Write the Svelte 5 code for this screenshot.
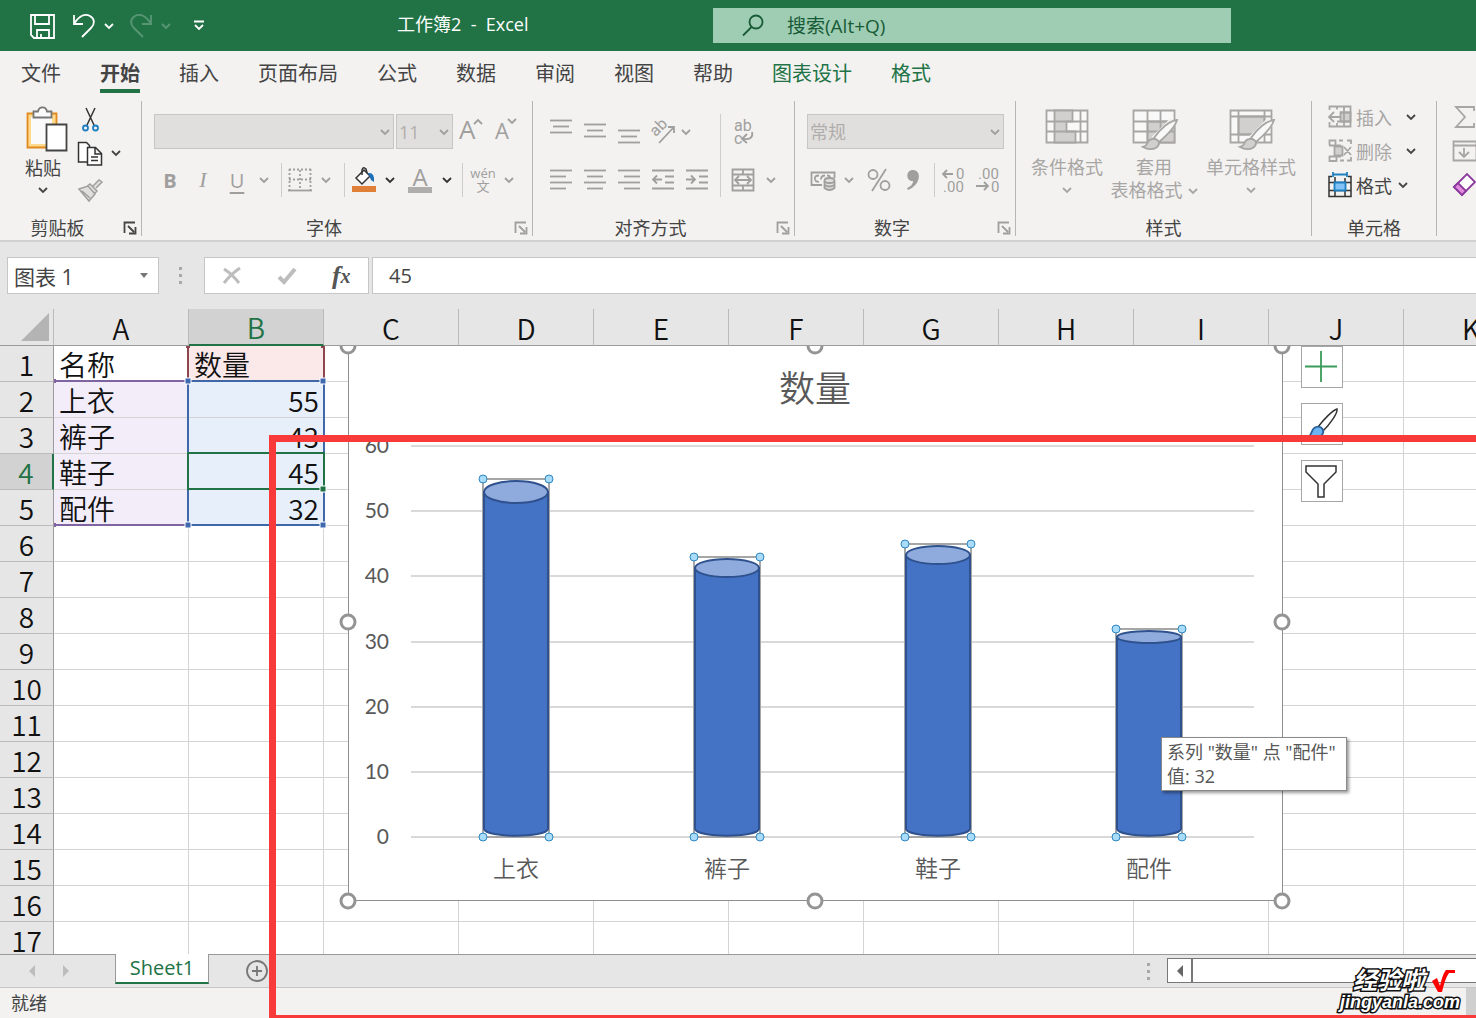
<script>
  const tabs = [
    { name: '文件' }, { name: '开始', active: true }, { name: '插入' }, { name: '页面布局' },
    { name: '公式' }, { name: '数据' }, { name: '审阅' }, { name: '视图' }, { name: '帮助' },
    { name: '图表设计', context: true }, { name: '格式', context: true },
  ];
  const columns = 'ABCDEFGHIJK'.split('');
  const rowCount = 17;
  const data = [
    ['名称', '数量'],
    ['上衣', 55],
    ['裤子', 43],
    ['鞋子', 45],
    ['配件', 32],
  ];
  const rows = Array.from({ length: rowCount }, (_, i) => ({ n: i + 1, cells: data[i] ?? [] }));

  const axis = [
    { v: 60, y: 446 }, { v: 50, y: 511 }, { v: 40, y: 576 }, { v: 30, y: 642 },
    { v: 20, y: 707 }, { v: 10, y: 772 }, { v: 0, y: 837 },
  ];
  const bars = [
    { name: '上衣', x: 516, top: 479, ry: 11 },
    { name: '裤子', x: 727, top: 557, ry: 9 },
    { name: '鞋子', x: 938, top: 544, ry: 9 },
    { name: '配件', x: 1149, top: 629, ry: 6 },
  ];
  const base = 837;
  const frameHandles = [[348, 346], [815, 346], [1282, 346], [348, 622], [1282, 622], [348, 901], [815, 901], [1282, 901]];
  const rangeHandles = [[188, 381], [323, 381], [188, 525], [323, 525]];

  function cellClass(r, c) {
    if (r === 1 && c === 1) return 'series-name';
    if (r > 1 && r < 6 && c === 0) return 'categories';
    if (r > 1 && r < 6 && c === 1) return 'values';
    return '';
  }
</script>

{#snippet chev()}
  <svg class="chev" width="10" height="8" viewBox="0 0 10 8"><path d="M1 2l4 4 4-4" /></svg>
{/snippet}

{#snippet launcher(on)}
  <button class="launch" class:on aria-label="更多设置">
    <svg width="14" height="14" viewBox="0 0 14 14"><path d="M1.500 12V1.500H12M5 5l6 6M12.500 6v6.500H6" /></svg>
  </button>
{/snippet}

{#snippet lines(list)}
  <svg width="24" height="24" viewBox="0 0 24 24">
    {#each list as [x1, x2, y]}<path d="M{x1} {y}.500H{x2}" />{/each}
  </svg>
{/snippet}

{#snippet paintbrush()}
  <path class="halo" d="M24 31L43 12" />
  <path class="white" d="M23 29C29 20 38 12 46 11C44 19 35 27 28 33Z" />
  <path class="shade" d="M12 38C18 37 15 31 21 30C26 29 30 33 27 37C24 41 17 41 12 38Z" />
{/snippet}

<div class="app">
  <header class="titlebar">
    <div class="qat">
      <button aria-label="保存"><svg width="26" height="26" viewBox="0 0 26 26"><path d="M2 2h23v23H5l-3-3zM6 2v9h14V2M8 24v-7h12v7M12 24v-3" /></svg></button>
      <button aria-label="撤消"><svg width="24" height="26" viewBox="0 0 24 26"><path d="M2 2v9h9M2.500 10C7 3 13 0 18 3c5 3 5 8 1 12l-9 9" /></svg></button>
      <button class="drop" aria-label="撤消列表">{@render chev()}</button>
      <button class="off" aria-label="恢复"><svg width="24" height="26" viewBox="0 0 24 26"><path d="M22 2v9h-9M21.500 10C17 3 11 0 6 3c-5 3-5 8-1 12l9 9" /></svg></button>
      <button class="drop off" aria-label="恢复列表">{@render chev()}</button>
      <button class="more" aria-label="自定义快速访问工具栏"><svg width="12" height="11" viewBox="0 0 12 11"><path d="M1 1.500h10M2 5l4 4 4-4" /></svg></button>
    </div>
    <h1>工作簿2&nbsp; -&nbsp; Excel</h1>
    <label class="search">
      <svg width="24" height="24" viewBox="0 0 24 24"><circle cx="15" cy="8" r="6.500" /><path d="M10.500 13L2 21.500" /></svg>
      <input type="text" placeholder="搜索(Alt+Q)" aria-label="搜索" />
    </label>
  </header>

  <nav class="tabs">
    {#each tabs as t}
      <button class:active={t.active} class:context={t.context}>{t.name}</button>
    {/each}
  </nav>

  <section class="ribbon">
    <div class="group clipboard">
      <div class="body">
        <button class="paste">
          <svg width="46" height="48" viewBox="-3 0 46 48">
            <path class="board" d="M4.500 7.500h29v34h-29z" />
            <path class="sheet" d="M8 11h21v27H8z" />
            <path class="clip" d="M10.500 11.500V5.500H15C16 0 23 0 24 5.500H28.500V11.500Z" />
            <path class="page" d="M23.500 18.500h20v26h-20z" />
          </svg>
          <span>粘贴</span>
          {@render chev()}
        </button>
        <div class="small">
          <button aria-label="剪切"><svg width="26" height="26" viewBox="0 0 26 26"><path class="dark thin" d="M9 1l8 17M18 1l-8 17" /><circle class="blue" cx="8.500" cy="21" r="2.500" /><circle class="blue" cx="18.500" cy="21" r="2.500" /></svg></button>
          <span></span>
          <button aria-label="复制"><svg width="26" height="26" viewBox="0 0 26 26"><path class="dark fillw thin" d="M1.500 2.500h8l3 3V22h-11z" /><path class="dark fillw thin" d="M10.500 7.500h8l6 6v11.500h-14zM18 8v6h6M14 17h7M14 20.500h7" /></svg></button>
          <button aria-label="复制选项">{@render chev()}</button>
          <button aria-label="格式刷"><svg width="26" height="26" viewBox="0 0 26 26"><path class="grey" d="M2 13l9-3 7 8-6 7zM9 11l4-3 7 7-3 3M16 10l6-6 3 2-6 6M5 15l8 7" /></svg></button>
        </div>
      </div>
      <div class="caption"><span>剪贴板</span>{@render launcher(true)}</div>
    </div>

    <div class="group font dim">
      <div class="body">
        <div class="top">
          <div class="combo"><select disabled aria-label="字体"><option></option></select>{@render chev()}</div>
          <div class="combo"><select disabled aria-label="字号"><option>11</option></select>{@render chev()}</div>
          <button class="big" aria-label="增大字号">A<svg width="8" height="5" viewBox="0 0 8 5"><path d="M0 5l4-4 4 4" /></svg></button>
          <button class="mid" aria-label="减小字号">A<svg width="8" height="5" viewBox="0 0 8 5"><path d="M0 0l4 4 4-4" /></svg></button>
        </div>
        <div class="tools">
          <button class="b">B</button>
          <button class="i">I</button>
          <button class="u">U</button>
          <button aria-label="下划线选项">{@render chev()}</button>
          <i class="sep"></i>
          <button aria-label="边框"><svg width="24" height="24" viewBox="0 0 24 24"><path class="dots" d="M1.500 1v21M22.500 1v21M1 1.500h22M12 2v20M1 11.500h22" /><path d="M0 22.500h24" /></svg></button>
          <button aria-label="边框选项">{@render chev()}</button>
          <i class="sep"></i>
          <button aria-label="填充颜色"><svg width="26" height="26" viewBox="0 0 26 26"><path class="orange" d="M1 19h24v6H1z" /><path class="dark thin fillw" d="M5 11l8-8 6 6-8 8z" /><path class="dark thin" d="M11 8V3q1-4 4-1l1 4" /><path class="bluef" d="M17 6q7-1 6 9l-3-2z" /></svg></button>
          <button class="on" aria-label="填充颜色选项">{@render chev()}</button>
          <button class="acolor" aria-label="字体颜色"><span>A</span></button>
          <button class="on" aria-label="字体颜色选项">{@render chev()}</button>
          <i class="sep"></i>
          <button class="wen"><span>wén</span><span>文</span></button>
          <button aria-label="拼音选项">{@render chev()}</button>
        </div>
      </div>
      <div class="caption"><span>字体</span>{@render launcher(false)}</div>
    </div>

    <div class="group align dim">
      <div class="body">
        <button aria-label="顶端对齐">{@render lines([[1, 23, 0], [4, 20, 6], [1, 23, 12]])}</button>
        <button aria-label="垂直居中">{@render lines([[1, 23, 4], [4, 20, 10], [1, 23, 16]])}</button>
        <button aria-label="底端对齐">{@render lines([[1, 23, 10], [4, 20, 16], [1, 23, 22]])}</button>
        <button aria-label="方向"><svg width="26" height="26" viewBox="0 0 26 26"><text class="ab mid-anchor" x="0" y="0" transform="translate(12 12) rotate(-45)">ab</text><path d="M9 24L24 8M18 8h6v6" /></svg></button>
        <button class="near" aria-label="方向选项">{@render chev()}</button>
        <i class="sep tall"></i>
        <button aria-label="自动换行"><svg width="26" height="28" viewBox="0 0 26 28"><text class="ab" x="4" y="13">ab</text><text class="ab" x="4" y="26">c</text><path d="M22 14q2 8-9 7M17 16l-5 5 5 4" /></svg></button>
        <span></span>
        <button aria-label="左对齐">{@render lines([[1, 23, 2], [1, 17, 8], [1, 23, 14], [1, 17, 20]])}</button>
        <button aria-label="居中">{@render lines([[1, 23, 2], [4, 20, 8], [1, 23, 14], [4, 20, 20]])}</button>
        <button aria-label="右对齐">{@render lines([[1, 23, 2], [7, 23, 8], [1, 23, 14], [7, 23, 20]])}</button>
        <button aria-label="减少缩进"><svg width="24" height="24" viewBox="0 0 24 24"><path d="M1 2.500h22M14 8.500h9M14 14.500h9M1 20.500h22M11 11.500H2M6 7.500l-4 4 4 4" /></svg></button>
        <button aria-label="增加缩进"><svg width="24" height="24" viewBox="0 0 24 24"><path d="M1 2.500h22M14 8.500h9M14 14.500h9M1 20.500h22M1 11.500h9M6 7.500l4 4-4 4" /></svg></button>
        <button aria-label="合并后居中"><svg width="24" height="24" viewBox="0 0 24 24"><path d="M1.500 1.500h21v21h-21zM1 6.500h22M1 17.500h22M12 2v4M12 18v4M4 12h16M8 8l-4 4 4 4M16 8l4 4-4 4" /></svg></button>
        <button aria-label="合并选项">{@render chev()}</button>
      </div>
      <div class="caption"><span>对齐方式</span>{@render launcher(false)}</div>
    </div>

    <div class="group number dim">
      <div class="body">
        <div class="combo"><select disabled aria-label="数字格式"><option>常规</option></select>{@render chev()}</div>
        <div class="tools">
          <button aria-label="会计数字格式"><svg width="26" height="24" viewBox="0 0 26 24"><path d="M12 17H1.500V4.500h23V10M9 7.500q-5 0-4 4q1 3 4 2M15 7.500q-4 0-4 4M17 7.500q3 0 3 2" /><path class="coin" d="M14.500 13v7q5 4 10 0v-7" /><ellipse class="coin" cx="19.500" cy="12.500" rx="5" ry="2.500" /><path d="M14.500 17q5 3 10 0" /></svg></button>
          <button aria-label="会计格式选项">{@render chev()}</button>
          <button aria-label="百分比样式"><svg width="24" height="24" viewBox="0 0 24 24"><circle cx="6" cy="6.500" r="4.500" /><circle cx="18" cy="17.500" r="4.500" /><path d="M19 1L5 23" /></svg></button>
          <button aria-label="千位分隔样式"><svg width="14" height="22" viewBox="0 0 14 22"><path class="solid" d="M7 1c9 0 8 15-5 20l-1-2c5-2 6-5 6-7C0 13-1 1 7 1z" /></svg></button>
          <i class="sep"></i>
          <button aria-label="增加小数位数"><svg width="26" height="28" viewBox="0 0 26 28"><text class="dec" x="15" y="13">0</text><text class="dec" x="2" y="26">.00</text><path d="M12 8H2M6 4L2 8l4 4" /></svg></button>
          <button aria-label="减少小数位数"><svg width="26" height="28" viewBox="0 0 26 28"><text class="dec" x="3" y="13">.00</text><text class="dec" x="16" y="26">0</text><path d="M1 20h12M9 16l4 4-4 4" /></svg></button>
        </div>
      </div>
      <div class="caption"><span>数字</span>{@render launcher(false)}</div>
    </div>

    <div class="group styles dim">
      <div class="body">
        <button>
          <svg width="46" height="42" viewBox="0 0 46 42"><path class="white" d="M2.500 1.500h41v32h-41z" /><path class="shade" d="M10.500 1.500h18v11h-6v10h9v11h-21z" /><path d="M2 12.500h42M2 22.500h42M36.500 2v31" /></svg>
          <span>条件格式</span>{@render chev()}
        </button>
        <button>
          <svg width="46" height="42" viewBox="0 0 46 42"><path class="white" d="M2.500 1.500h41v32h-41z" /><path class="shade" d="M16.500 12.500h27v21h-27z" /><path d="M2 12.500h42M2 22.500h42M16.500 2v31M29.500 2v31" />{@render paintbrush()}</svg>
          <span>套用</span><span>表格格式 {@render chev()}</span>
        </button>
        <button>
          <svg width="46" height="42" viewBox="0 0 46 42"><path class="white" d="M2.500 1.500h41v32h-41z" /><path class="shade" d="M10.500 7.500h26v18h-26z" /><path d="M2 7.500h42M2 25.500h42M10.500 2v31M36.500 2v31" />{@render paintbrush()}</svg>
          <span>单元格样式</span>{@render chev()}
        </button>
      </div>
      <div class="caption"><span>样式</span></div>
    </div>

    <div class="group cells">
      <div class="body">
        <button class="dimmed"><svg width="24" height="24" viewBox="0 0 24 24"><path class="shade" d="M12.500 7.500h10v9h-10z" /><path d="M1.500 5V1.500h21v20h-21V17M9 1.500v3M16 2v19M12 7.500h11M9 16.500h14M9 18v4M12 12H1M6 7l-5 5 5 5" /></svg><span>插入</span></button>
        <button aria-label="插入选项">{@render chev()}</button>
        <button class="dimmed"><svg width="24" height="24" viewBox="0 0 24 24"><path class="shade" d="M6.500 7.500h8v9h-8z" /><path d="M1.500 6V1.500h6v5M1 6.500h12M11 1.500h4M19 1.500h4V5M1 17.500h12M1.500 17v5h7v-4M12 21.500h4M19 21.500h4V18M16 8l7 8M23 8l-7 8" /></svg><span>删除</span></button>
        <button aria-label="删除选项">{@render chev()}</button>
        <button class="format"><svg width="24" height="26" viewBox="0 0 24 26"><path class="dark thin" d="M4 4.500H1v20h22v-20h-3M7 5v19M17 6v18M1 10.500h22M1 18.500h22" /><path class="sky" d="M6.500 10.500h11v8h-11z" /><path class="blue" d="M5 2.500h14M5 0v5M19 0v5" /></svg><span>格式</span>{@render chev()}</button>
      </div>
      <div class="caption"><span>单元格</span></div>
    </div>

    <div class="group editing">
      <div class="body">
        <button class="dimmed" aria-label="自动求和"><svg width="26" height="24" viewBox="0 0 26 24"><path d="M22 6V2H4l9 10-9 10h18v-4" /></svg></button>
        <button class="dimmed" aria-label="填充"><svg width="26" height="24" viewBox="0 0 26 24"><path d="M1.500 2.500h23v19h-23zM1 6.500h24M12 9v9M7 13l5 5 5-5" /></svg></button>
        <button aria-label="清除"><svg width="26" height="24" viewBox="0 0 26 24"><path class="purple" d="M2 14l13-13 8 8-13 13z" /><path class="pink" d="M2 14l4-4 8 8-4 4z" /></svg></button>
      </div>
    </div>
  </section>

  <section class="formula">
    <div class="namebox">
      <input type="text" value="图表 1" aria-label="名称框" />
      <button aria-label="名称列表"><svg width="8" height="5" viewBox="0 0 8 5"><path d="M0 0h8L4 5z" /></svg></button>
    </div>
    <i class="grip"></i>
    <div class="fx">
      <button aria-label="取消"><svg width="20" height="20" viewBox="0 0 20 20"><path d="M2 3q8 5 15 14M18 2Q9 8 2 17" /></svg></button>
      <button aria-label="输入"><svg width="20" height="20" viewBox="0 0 20 20"><path class="thick" d="M2 11l5 5L18 3" /></svg></button>
      <button class="fn" aria-label="插入函数">f<sub>x</sub></button>
    </div>
    <input class="entry" type="text" value="45" aria-label="编辑栏" />
  </section>

  <main class="grid-area">
    <table>
      <colgroup><col class="rowcol" />{#each columns as c}<col />{/each}</colgroup>
      <thead>
        <tr><th class="corner"><svg width="30" height="30" viewBox="0 0 30 30"><path d="M29 0v28H1z" /></svg></th>
          {#each columns as c}<th class:picked={c === 'B'}>{c}</th>{/each}</tr>
      </thead>
      <tbody>
        {#each rows as r}
          <tr>
            <th class:picked={r.n === 4}>{r.n}</th>
            {#each columns as c, i}<td class={cellClass(r.n, i)}>{r.cells[i] ?? ''}</td>{/each}
          </tr>
        {/each}
      </tbody>
    </table>

    <div class="canvas">
      <svg class="drawing" width="1422" height="608" viewBox="54 346 1422 608">
        <path class="r-red" d="M188 347V381M324 347V381" />
        <path class="r-purple" d="M54 381H188M54 525H188" />
        <path class="r-blue" d="M188 381H324V525H188Z" />
        <path class="r-green" d="M188 453H324V489H188Z" />
        <path class="r-purplef" d="M52 379h4v4h-4zM52 523h4v4h-4z" />
        <path class="r-redf" d="M186 345h4v3h-4zM321 345h4v3h-4z" />
        {#each rangeHandles as [x, y]}<rect class="r-handle" x={x - 3} y={y - 3} width="6" height="6" />{/each}
        <rect class="r-fill" x="320" y="486" width="6" height="6" />

        <rect class="frame" x="348.500" y="340.500" width="934" height="560" />
        <text class="c-title" x="815" y="402">数量</text>
        {#each axis as a}
          <path class="grid" d="M411 {a.y}H1254" />
          <text class="c-axis" x="389" y={a.y + 7}>{a.v}</text>
        {/each}
        {#each bars as b}
          <rect class="outline" x={b.x - 33} y={b.top} width="66" height={base - b.top} />
          <path class="tube" d="M{b.x - 32} {b.top + b.ry + 2}V{base - 8}C{b.x - 30} {base + 1} {b.x + 30} {base + 1} {b.x + 32} {base - 8}V{b.top + b.ry + 2}Z" />
          <ellipse class="lid" cx={b.x} cy={b.top + b.ry + 2} rx="32" ry={b.ry} />
          {#each [[b.x - 33, b.top], [b.x + 33, b.top], [b.x - 33, base], [b.x + 33, base]] as [x, y]}
            <circle class="dot" cx={x} cy={y} r="4" />
          {/each}
          <text class="c-cat" x={b.x} y="877">{b.name}</text>
        {/each}
        {#each frameHandles as [x, y]}<circle class="ring" cx={x} cy={y} r="7" />{/each}
      </svg>

      <div class="chart-tools">
        <button aria-label="图表元素"><svg width="34" height="34" viewBox="0 0 34 34"><path class="plus" d="M16 1v31M0 16.500h32" /></svg></button>
        <button aria-label="图表样式"><svg width="34" height="34" viewBox="0 0 34 34"><path class="ink" d="M13 20C19 12 28 3 32 2C33 6 25 17 18 24Z" /><path class="tip" d="M2 30C8 29 5 22 11 20C17 18 20 24 17 28C13 32 7 32 2 30Z" /></svg></button>
        <button aria-label="图表筛选器"><svg width="34" height="34" viewBox="0 0 34 34"><path class="ink" d="M1 2h30v6L19 20v13h-6V20L1 8z" /></svg></button>
      </div>

      <div class="tooltip">系列 "数量" 点 "配件"<br />值: 32</div>
    </div>
  </main>

  <footer class="sheetbar">
    <button class="nav" aria-label="上一张"><svg width="8" height="12" viewBox="0 0 8 12"><path d="M7 0v12L1 6z" /></svg></button>
    <button class="nav" aria-label="下一张"><svg width="8" height="12" viewBox="0 0 8 12"><path d="M1 0v12l6-6z" /></svg></button>
    <button class="sheet-tab">Sheet1</button>
    <button class="add" aria-label="新工作表"><svg width="24" height="24" viewBox="0 0 24 24"><circle cx="12" cy="12" r="10" /><path d="M12 7v10M7 12h10" /></svg></button>
    <i class="grip"></i>
    <div class="scroll"><button aria-label="向左滚动"><svg width="8" height="12" viewBox="0 0 8 12"><path d="M7 0v12L1 6z" /></svg></button></div>
  </footer>
  <div class="status"><span>就绪</span><i></i></div>

  <div class="marker"></div>
  <div class="brand">
    <div class="zh">经验啦<svg width="24" height="24" viewBox="0 0 24 24"><path d="M1 12l5-3 3 8C11 9 12 5 15 1h9v3h-6C15 8 13 15 11 23H7z" /></svg></div>
    <div class="en">jingyanla.com</div>
  </div>
</div>

<style>
  :global(body) { overflow: hidden; }
  * { box-sizing: border-box; }
  .app {
    position: relative; display: flex; flex-direction: column; height: 100vh; overflow: hidden;
    font-family: "Open Sans", "Noto Sans CJK SC", sans-serif; font-size: 18px; color: #444; background: #e6e6e6;
  }
  button, input, select { font: inherit; color: inherit; border: 0; background: none; padding: 0; margin: 0; min-width: 0; }
  button { display: flex; align-items: center; justify-content: center; }
  svg { display: block; flex: none; fill: none; stroke: currentColor; stroke-width: 1.8; overflow: visible; }

  .titlebar { flex: none; height: 51px; display: grid; grid-template-columns: 397px 316px minmax(200px, 518px) 1fr; align-items: center; background: #217346; color: #fff; }
  .qat { display: flex; align-items: center; padding-left: 28px; }
  .qat button { width: 28px; height: 36px; }
  .qat button + button { margin-left: 14px; }
  .qat button.drop { width: 12px; margin-left: 5px; }
  .qat .off { opacity: 0.25; }
  .qat button.drop + button.off { margin-left: 12px; }
  .qat button.more { width: 14px; margin-left: 20px; }
  h1 { margin: 0; padding-bottom: 4px; font-size: 18px; line-height: 26px; font-weight: 400; }
  .search { display: flex; align-items: center; gap: 22px; height: 35px; padding-left: 28px; background: #9fcdb3; color: #185c37; font-size: 19px; }
  .search input { flex: 1; outline: 0; }
  .search input::placeholder { color: #185c37; opacity: 1; }

  .tabs { flex: none; height: 46px; display: flex; gap: 39px; padding: 4px 21px 0; background: #f3f2f1; font-size: 20px; }
  .tabs button { height: 38px; padding-top: 1px; border-bottom: 4px solid transparent; white-space: nowrap; }
  .tabs .active { font-weight: 700; border-color: #217346; }
  .tabs .context { color: #217346; }

  .ribbon { flex: none; height: 145px; display: flex; padding: 4px 0 5px; background: #f3f2f1; border-bottom: 2px solid #d2d0ce; overflow: hidden; }
  .group { flex: none; display: flex; flex-direction: column; height: 135px; border-right: 1px solid #b8b6b4; }
  .body { flex: 1; padding: 13px 0 0 11px; }
  .caption { height: 16px; display: flex; align-items: center; line-height: 16px; white-space: nowrap; }
  .caption span { flex: 1; text-align: center; color: #444; }
  .launch { width: 26px; padding-right: 4px; justify-content: flex-end; color: #a19f9d; }
  .launch.on { color: #444; }
  .dim { color: #a19f9d; }
  .dimmed { color: #a8a6a4; }
  .on { color: #333; }
  .sep { justify-self: center; align-self: stretch; width: 1px; background: #cfcdcb; }
  .dark { stroke: #333; }
  .thin { stroke-width: 1.5; }
  .fillw { fill: #fff; }
  .blue { stroke: #1e7fc0; }
  .bluef { fill: #1e6fb8; stroke: none; }
  .grey { stroke: #a19f9d; fill: #e1dfdd; stroke-width: 1.5; }
  .orange { fill: #e07f38; stroke: none; }
  .white { fill: #f8f8f8; }
  .shade { fill: #d2d0ce; }
  .halo { stroke: #f3f2f1; stroke-width: 9; }
  .solid { fill: currentColor; stroke: none; }

  .clipboard { width: 142px; }
  .clipboard .body { display: flex; gap: 11px; padding: 5px 0 0 20px; }
  .paste { flex-direction: column; justify-content: flex-start; width: 46px; }
  .paste span { line-height: 28px; }
  .paste .chev { margin-top: 4px; }
  .board { stroke: #e08a1e; fill: #ffd98c; }
  .sheet { fill: #fafafa; stroke: none; }
  .clip { stroke: #777; fill: #fafafa; }
  .page { stroke: #444; fill: #fff; }
  .small { display: grid; grid-template-columns: 26px 26px; grid-template-rows: 28px 36px 34px; row-gap: 1px; align-content: start; }

  .font { width: 391px; }
  .font .body { padding-left: 12px; }
  .top { display: grid; grid-template-columns: 240px 57px 38px 30px; column-gap: 2px; }
  .combo { display: grid; align-items: center; height: 35px; border: 1px solid #c8c6c4; background: #e1dfdd; }
  .combo select { grid-area: 1 / 1; width: 100%; height: 100%; padding-left: 2px; appearance: none; opacity: 1; color: #b0aeac; }
  .combo .chev { grid-area: 1 / 1; justify-self: end; margin-right: 3px; pointer-events: none; }
  .big, .mid { align-items: flex-start; justify-content: flex-start; height: 30px; padding-left: 4px; }
  .big { font-size: 26px; line-height: 30px; }
  .mid { font-size: 22px; line-height: 32px; padding-left: 0; }
  .big svg, .mid svg { margin: 5px 0 0 -1px; }
  .tools { display: grid; margin-top: 14px; height: 34px; align-items: center; }
  .font .tools { grid-template-columns: 32px 34px 34px 20px 14px 24px 28px 8px 32px 20px 40px 14px 16px 26px 26px; }
  .b { font-weight: 700; font-size: 20px; }
  .i { font-family: "Liberation Serif", serif; font-style: italic; font-size: 22px; }
  .u { text-decoration: underline; text-underline-offset: 4px; font-size: 20px; }
  .dots { stroke-dasharray: 2 2; }
  .acolor span { width: 24px; height: 26px; line-height: 20px; font-size: 24px; border-bottom: 6px solid #b0aeac; }
  .wen { flex-direction: column; font-size: 13px; line-height: 13px; }

  .align { width: 262px; }
  .align .body { display: grid; grid-template-columns: repeat(5, 34px) 12px 34px 22px; grid-template-rows: 35px 34px; row-gap: 14px; }
  .align .sep.tall { grid-area: 1 / 6 / 3 / 7; }
  .near { justify-content: flex-start; padding-left: 1px; }
  .ab { font-family: Roboto, sans-serif; font-size: 16px; fill: currentColor; stroke: none; }
  .mid-anchor { text-anchor: middle; }

  .number { width: 221px; }
  .number .body { padding: 13px 11px 0 12px; }
  .number .tools { grid-template-columns: 32px 20px 40px 28px 14px 26px 42px; }
  .dec { font-family: Roboto, sans-serif; font-size: 15px; fill: currentColor; stroke: none; }
  .coin { fill: #e1dfdd; }

  .styles { width: 296px; }
  .styles .body { display: grid; grid-template-columns: 78px 96px 98px; padding: 8px 0 0 12px; }
  .styles button { flex-direction: column; justify-content: flex-start; white-space: nowrap; color: #a8a6a4; }
  .styles button span { display: flex; align-items: center; gap: 5px; line-height: 23px; }
  .styles button > svg + span { margin-top: 5px; }
  .styles button > .chev { margin-top: 7px; }

  .cells { width: 125px; }
  .cells .body { display: grid; grid-template-columns: 72px 22px; grid-auto-rows: 32px; row-gap: 2px; padding: 0 0 0 16px; }
  .cells .body button { justify-content: flex-start; gap: 4px; white-space: nowrap; }
  .cells .format { grid-column: span 2; }
  .cells button + button .chev { margin-left: 6px; }
  .cells .body .format .chev { margin-left: 2px; }
  .sky { fill: #83c3f7; stroke: #1e7fc0; }
  .editing { border: 0; }
  .editing .body { display: grid; grid-auto-rows: 32px; row-gap: 2px; padding: 0 0 0 15px; }
  .purple { stroke: #8b3a9c; fill: #fff; }
  .pink { stroke: #8b3a9c; fill: #e28be0; }

  .formula { flex: none; display: flex; height: 67px; padding: 15px 0 15px 7px; font-size: 20px; background: #e6e6e6; }
  .namebox { display: flex; width: 152px; background: #fff; border: 1px solid #c6c6c6; }
  .namebox input { flex: 1; padding-left: 6px; outline: 0; font-size: 21px; }
  .namebox button { width: 28px; }
  .namebox path { fill: #777; stroke: none; }
  .grip { width: 3px; height: 17px; background: repeating-linear-gradient(#a8a8a8 0 3px, transparent 3px 7px); }
  .formula .grip { align-self: center; margin: 0 22px 0 20px; }
  .fx { display: flex; justify-content: space-around; width: 165px; background: #fff; border: 1px solid #c6c6c6; color: #bdbdbd; }
  .fx svg { stroke-width: 3; }
  .fx .thick { stroke-width: 4; }
  .fx .fn { color: #555; font: italic 700 26px/30px "Liberation Serif", serif; }
  .fx sub { font-size: 20px; }
  .entry { flex: 1; margin-left: 3px; padding-left: 16px; background: #fff; border: 1px solid #c6c6c6; border-right: 0; outline: 0; }

  .grid-area { position: relative; flex: 1; min-height: 0; overflow: hidden; background: #fff; }
  table { table-layout: fixed; width: 1539px; border-collapse: separate; border-spacing: 0; font-family: "Noto Sans CJK SC", sans-serif; font-size: 28px; font-weight: 350; color: #111; }
  col { width: 135px; }
  col.rowcol { width: 54px; }
  th, td { height: 36px; padding: 0; line-height: 34px; overflow: hidden; white-space: nowrap; }
  th { font-weight: 350; background: #e6e6e6; }
  thead th { height: 37px; padding-top: 2px; line-height: 33px; border-right: 1px solid #bbb; border-bottom: 1px solid #9b9b9b; }
  tbody th { border-right: 1px solid #9b9b9b; border-bottom: 1px solid #bbb; }
  .corner svg { margin-left: 20px; }
  .corner path { fill: #b4b4b4; stroke: none; }
  th.picked { background: #d2d2d2; color: #217346; }
  thead th.picked { border-bottom: 2px solid #217346; }
  tbody th.picked { border-right: 2px solid #217346; }
  td { border-right: 1px solid #d4d4d4; border-bottom: 1px solid #d4d4d4; padding: 0 4px 0 5px; }
  td.series-name { background: #fbe9ea; }
  td.categories { background: #f2edf9; }
  td.values { background: #e7effa; text-align: right; }

  .canvas { position: absolute; top: 37px; left: 54px; right: 0; bottom: 0; overflow: hidden; }
  .drawing { stroke: none; stroke-width: 2; }
  .r-red { stroke: #8d4650; }
  .r-redf { fill: #8d4650; }
  .r-purple { stroke: #8064a2; }
  .r-purplef { fill: #8064a2; }
  .r-blue { stroke: #4068a8; }
  .r-green { stroke: #217346; }
  .r-handle { fill: #4068b0; stroke: #fff; stroke-width: 1; }
  .r-fill { fill: #217346; stroke: #fff; stroke-width: 1; }
  .frame { fill: #fff; stroke: #8f8f8f; stroke-width: 1; }
  .grid { stroke: #d9d9d9; }
  .c-title, .c-cat { fill: #595959; text-anchor: middle; font-weight: 350; }
  .c-title { font-size: 36px; }
  .c-cat { font-size: 23px; }
  .c-axis { fill: #595959; text-anchor: end; font-family: Lato, sans-serif; font-size: 21px; }
  .outline { stroke: #a6a6a6; }
  .tube { fill: #4472c4; stroke: #2f528f; }
  .lid { fill: #8faadc; stroke: #2f528f; }
  .dot { fill: #a9dcfb; stroke: #2e86c1; stroke-width: 1; }
  .ring { fill: #fff; stroke: #949494; stroke-width: 3; }

  .chart-tools { position: absolute; top: 0; left: 1247px; display: grid; gap: 15px; }
  .chart-tools button { width: 42px; height: 42px; background: #fff; border: 1px solid #a6a6a6; }
  .plus { stroke: #3b9c5a; }
  .ink { fill: #fff; stroke: #333; stroke-width: 1.5; }
  .tip { fill: #6cb4f2; stroke: #2a5f96; }
  .tooltip { position: absolute; top: 391px; left: 1107px; padding: 2px 10px 2px 5px; border: 1px solid #8a8a8a; background: #fff; box-shadow: 2px 2px 3px #0006; line-height: 24px; color: #575757; white-space: nowrap; }

  .sheetbar { flex: none; display: flex; height: 34px; border-top: 1px solid #999; border-bottom: 1px solid #c6c6c6; padding-left: 15px; }
  .nav { width: 34px; height: 32px; }
  .nav path { fill: #bdbdbd; stroke: none; }
  .sheet-tab { width: 94px; height: 30px; margin: -1px 0 0 32px; padding-bottom: 2px; background: #fff; border: 1px solid #999; border-top: 0; border-bottom: 2px solid #217346; color: #217346; font-size: 20px; }
  .add { margin-left: 36px; color: #777; }
  .sheetbar .grip { align-self: center; margin-left: auto; margin-right: 17px; }
  .scroll { flex: none; width: 309px; height: 25px; margin-top: 3px; background: #fff; border: 1px solid #777; border-right: 0; }
  .scroll button { width: 25px; height: 100%; border-right: 2px solid #777; }
  .scroll path { fill: #666; stroke: none; }
  .status { flex: none; display: flex; justify-content: space-between; height: 30px; padding-left: 11px; line-height: 30px; background: #f3f2f1; }
  .status i { width: 10px; background: #cfcfcf; }

  .marker { position: absolute; top: 435px; left: 269px; right: 0; bottom: 0; border: solid #f93a3a; border-width: 7px 0 3px 7px; pointer-events: none; }
  .brand { position: absolute; right: 16px; bottom: 7px; color: #fff; font-family: "Liberation Sans", "Noto Sans CJK SC", sans-serif; font-weight: 700; font-style: italic; -webkit-text-stroke: 3px #111; paint-order: stroke fill; pointer-events: none; }
  .zh { display: flex; align-items: center; justify-content: flex-end; gap: 6px; margin-right: 5px; font-size: 24px; line-height: 24px; }
  .zh path { fill: #f00; stroke: none; }
  .en { font-size: 18px; line-height: 18px; }
</style>
